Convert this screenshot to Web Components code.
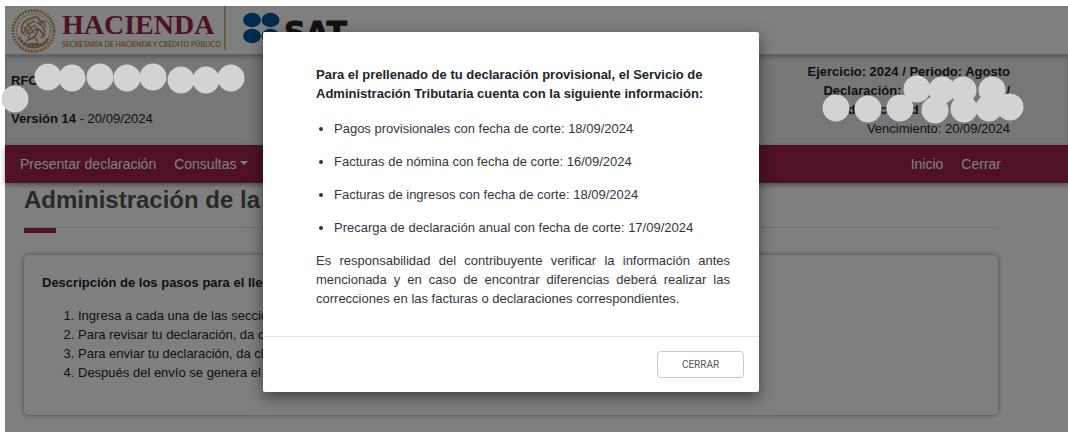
<!DOCTYPE html>
<html lang="es">
<head>
<meta charset="utf-8">
<title>Declaración provisional</title>
<style>
body {
    margin: 0;
    padding: 6px 0 0 5px;
    background: #fff;
    font-family: "Liberation Sans", Arial, sans-serif;
    font-size: 13px;
    line-height: 19px;
    color: #212529;
}
</style>
</head>
<body>
<sat-app>
    <brand-bar slot="top"></brand-bar>
    <info-bar slot="top"></info-bar>
    <nav-bar slot="top"></nav-bar>
    <page-title>Administración de la de</page-title>
    <steps-card>
        <span slot="heading">Descripción de los pasos para el llenado</span>
        <ol>
            <li>Ingresa a cada una de las secciones</li>
            <li>Para revisar tu declaración, da clic</li>
            <li>Para enviar tu declaración, da clic</li>
            <li>Después del envío se genera el acuse</li>
        </ol>
    </steps-card>
    <modal-dialog slot="modal">
        <span slot="heading">Para el prellenado de tu declaración provisional, el Servicio de Administración Tributaria cuenta con la siguiente información:</span>
        <cutoff-item label="Pagos provisionales" date="18/09/2024"></cutoff-item>
        <cutoff-item label="Facturas de nómina" date="16/09/2024"></cutoff-item>
        <cutoff-item label="Facturas de ingresos" date="18/09/2024"></cutoff-item>
        <cutoff-item label="Precarga de declaración anual" date="17/09/2024"></cutoff-item>
        <span slot="note">Es responsabilidad del contribuyente verificar la información antes mencionada y en caso de encontrar diferencias deberá realizar las correcciones en las facturas o declaraciones correspondientes.</span>
    </modal-dialog>
    <cover-dots slot="cover" side="left" points="43,71 67,72 95,71 122,72 148,71 176,74 201,74 226,72 10,93"></cover-dots>
    <cover-dots slot="cover" side="right" points="89,83 114,84 135,84 164,84 8,102 40,103 72,102 107,104 136,103 161,102 182,101"></cover-dots>
</sat-app>

<script>
function define(name, html, setup) {
    const template = document.createElement("template");
    template.innerHTML = html;
    customElements.define(name, class extends HTMLElement {
        constructor() {
            super();
            this.root = this.attachShadow({ mode: "open" });
            this.root.appendChild(template.content.cloneNode(true));
        }

        connectedCallback() {
            if (setup) setup(this, this.root);
        }
    });
}

define("sat-app", `
  <style>
  :host {
    display: block;
    position: relative;
    min-height: calc(100vh - 6px);
    background: #fff;
  }
  main {
    padding: 0 70px 17px 19px;
  }
  .backdrop {
    position: absolute;
    inset: 0;
    padding: 26px 70px 26px 19px;
    background: rgba(0, 0, 0, 0.5);
  }
  </style>
  <slot name="top"></slot>
  <main><slot></slot></main>
  <div class="backdrop"><slot name="modal"></slot></div>
  <slot name="cover"></slot>
`);

define("brand-bar", `
  <style>
  :host {
    display: flex;
    align-items: flex-start;
    height: 49px;
    padding-left: 6px;
    box-sizing: border-box;
    border-bottom: 1px solid #c8c8c8;
    background: #fff;
  }
  .seal { margin: 2px 6px 0 0; }
  .name {
    height: 44px;
    width: 162px;
    border-right: 2px solid #d4b483;
    white-space: nowrap;
  }
  .big {
    padding-top: 4px;
    font: bold 28px/30px "Liberation Serif", "Times New Roman", serif;
    color: #9d2449;
  }
  .small {
    font: bold 7px/8px Lato, sans-serif;
    color: #b38e5d;
  }
  .circles { margin: 6px 4px 0 17px; }
  .sat {
    padding-top: 11px;
    font: bold 30px/32px "DejaVu Sans", sans-serif;
    -webkit-text-stroke: 1px #282420;
    color: #282420;
  }
  </style>
  <svg class="seal" width="45" height="46" viewBox="0 0 45 46" fill="none" stroke="#bc955c">
    <circle cx="22.500" cy="23" r="20.500" stroke-width="3" stroke-dasharray="1.8 1.2"/>
    <circle cx="22.500" cy="23" r="17" stroke-width="1" stroke-dasharray="3 1"/>
    <path d="M8 29c3 9 22 14 30 0M10 32c5 9 19 10 26 1" stroke-width="2.4" stroke-dasharray="3 1"/>
    <path d="M11 25c-2-8 3-14 11-15 2-2 6-1 6 2l5 2-6 1c6 3 8 8 6 13-2-4-4-6-7-8 1 6-2 10-8 11" stroke-width="1.8"/>
    <path d="M12 26c3-7 6-12 12-13M14 28c3-6 6-10 11-11M17 30c2-5 4-8 9-9M13 19l6 8M16 15l7 10M19 31l-4 2M24 30l3 4M31 14l4 5M29 30l5-3" stroke-width="1.4"/>
    <path d="M17 36h11M20 39h5" stroke-width="2"/>
  </svg>
  <div class="name">
    <div class="big">HACIENDA</div>
    <div class="small">SECRETARÍA DE HACIENDA Y CRÉDITO PÚBLICO</div>
  </div>
  <svg class="circles" width="37" height="32" viewBox="0 0 37 32" fill="#00589f">
    <ellipse cx="9" cy="8" rx="9" ry="7.2"/>
    <ellipse cx="27.500" cy="8" rx="9" ry="7.2"/>
    <ellipse cx="9" cy="24" rx="9" ry="7.2"/>
    <ellipse cx="27.500" cy="24" rx="9" ry="7.2"/>
  </svg>
  <div class="sat">SAT</div>
`);

define("info-bar", `
  <style>
  :host {
    display: flex;
    justify-content: space-between;
    align-items: flex-start;
    height: 90px;
    padding: 7px 58px 0 6px;
    box-sizing: border-box;
    background: #eee;
    box-shadow: inset 0 3px 4px -1px rgba(0, 0, 0, 0.25);
  }
  .left { padding-top: 9px; }
  .left p { margin: 0 0 19px; }
  .right { text-align: right; }
  .row {
    display: flex;
    justify-content: space-between;
    padding-left: 16px;
  }
  .parts {
    justify-content: flex-start;
    gap: 24px;
    padding-left: 40px;
  }
  </style>
  <div class="left">
    <p><b>RFC:</b></p>
    <p><b>Versión 14</b> - 20/09/2024</p>
  </div>
  <div class="right">
    <b>Ejercicio: 2024 / Periodo: Agosto</b>
    <b class="row"><span>Declaración:</span><span>/</span></b>
    <b class="row parts"><span>d</span><span>c</span><span>d</span></b>
    <div>Vencimiento: 20/09/2024</div>
  </div>
`);

define("nav-bar", `
  <style>
  :host {
    display: block;
    position: relative;
    background: #9d2449;
    box-shadow: 0 2px 5px rgba(0, 0, 0, 0.4);
  }
  nav {
    display: flex;
    align-items: center;
    gap: 18px;
    height: 38px;
    padding: 0 67px 0 15px;
  }
  a, button {
    padding: 0;
    border: 0;
    background: none;
    font: 14px/22px "Liberation Sans", Arial, sans-serif;
    color: #fff;
    text-decoration: none;
  }
  .caret {
    display: inline-block;
    margin-left: 4px;
    border: 4px solid transparent;
    border-top-color: currentColor;
    border-bottom: 0;
    vertical-align: 4px;
  }
  .end { margin-left: auto; }
  </style>
  <nav>
    <a href="#presentar">Presentar declaración</a>
    <button type="button" aria-haspopup="true">Consultas<span class="caret"></span></button>
    <a class="end" href="#inicio">Inicio</a>
    <a href="#cerrar">Cerrar</a>
  </nav>
`);

define("page-title", `
  <style>
  :host { display: block; }
  h1 {
    margin: 0;
    padding: 2px 0 12px;
    font-size: 24px;
    line-height: 30px;
    color: #545454;
    white-space: nowrap;
  }
  .line {
    height: 5px;
    border-top: 1px solid #ddd;
  }
  .line::before {
    content: "";
    display: block;
    width: 32px;
    height: 5px;
    background: #9d2449;
  }
  </style>
  <h1><slot></slot></h1>
  <div class="line"></div>
`);

define("steps-card", `
  <style>
  :host {
    display: block;
    min-height: 160px;
    margin-top: 22px;
    padding: 18px;
    box-sizing: border-box;
    border-radius: 5px;
    box-shadow: 0 0 5px rgba(0, 0, 0, 0.45);
  }
  h2 {
    margin: 0 0 14px;
    font-size: 13px;
    line-height: 19px;
  }
  ::slotted(ol) {
    margin: 0;
    padding-left: 36px;
  }
  </style>
  <h2><slot name="heading"></slot></h2>
  <slot></slot>
`);

define("cutoff-item", `
  <style>
  :host {
    display: list-item;
    margin-bottom: 14px;
  }
  </style>
  <span></span>
`, (host, root) => {
    const label = host.getAttribute("label");
    const date = host.getAttribute("date");
    root.querySelector("span").textContent = `${label} con fecha de corte: ${date}`;
});

define("modal-dialog", `
  <style>
  :host {
    display: block;
    max-width: 496px;
    margin: 0 auto;
    border-radius: 2px;
    background: #fff;
    box-shadow: 0 5px 15px rgba(0, 0, 0, 0.5);
  }
  .body { padding: 33px 29px 28px 53px; }
  h2 {
    max-width: 390px;
    margin: 0 0 16px;
    font-size: 13px;
    line-height: 19px;
  }
  .list {
    padding-left: 18px;
    list-style: disc;
  }
  p {
    margin: 0;
    text-align: justify;
  }
  .list, p { color: #33373b; }
  footer {
    display: flex;
    justify-content: flex-end;
    padding: 14px 15px;
    border-top: 1px solid #e4e4ea;
  }
  button {
    width: 87px;
    height: 27px;
    border: 1px solid #c8c8c8;
    border-radius: 4px;
    background: #fff;
    font: 10px Roboto, sans-serif;
    color: #555;
  }
  </style>
  <div class="body">
    <h2><slot name="heading"></slot></h2>
    <div class="list"><slot></slot></div>
    <p><slot name="note"></slot></p>
  </div>
  <footer><button type="button">CERRAR</button></footer>
`, (host, root) => {
    root.querySelector("button").addEventListener("click", () => host.remove());
});

// Round patches that hide the taxpayer's data
define("cover-dots", `
  <style>
  :host {
    position: absolute;
    top: 0;
    left: 0;
    pointer-events: none;
  }
  :host([side="right"]) { left: auto; right: 44px; }
  svg { display: block; overflow: visible; }
  </style>
  <svg width="196" height="120" fill="#d1d3d4"></svg>
`, (host, root) => {
    const svg = root.querySelector("svg");
    host.getAttribute("points").split(" ").forEach(point => {
        const [x, y] = point.split(",");
        const dot = document.createElementNS("http://www.w3.org/2000/svg", "circle");
        dot.setAttribute("cx", x);
        dot.setAttribute("cy", y);
        dot.setAttribute("r", 13.5);
        svg.appendChild(dot);
    });
});
</script>
</body>
</html>
